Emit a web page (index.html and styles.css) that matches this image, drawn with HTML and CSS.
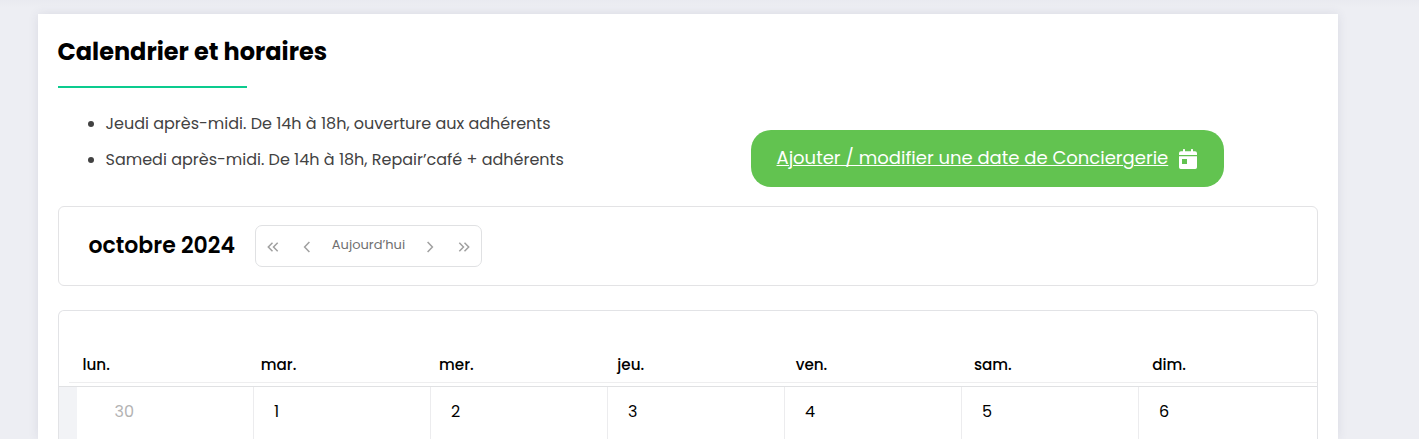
FILE: index.html
```html
<!DOCTYPE html>
<html lang="fr">
<head>
  <meta charset="UTF-8">
  <meta name="viewport" content="width=device-width, initial-scale=1.0">
  <title>Calendrier et horaires</title>
  <link rel="stylesheet" href="styles.css">
</head>
<body>
  <main class="card">
    <h1 class="title">Calendrier et horaires</h1>

    <section class="intro">
      <ul class="hours">
        <li>Jeudi après-midi. De 14h à 18h, ouverture aux adhérents</li>
        <li>Samedi après-midi. De 14h à 18h, Repair’café + adhérents</li>
      </ul>
      <a class="add-button" href="#">
        <span>Ajouter / modifier une date de Conciergerie</span>
        <svg width="18" height="20" viewBox="0 0 18 20" fill="#fff">
          <path d="M0 4.3Q0 2.2 2 2.2H4V.6Q4 0 4.6 0H5.4Q6 0 6 .6V2.2H12V.6Q12 0 12.6 0H13.4Q14 0 14 .6V2.2H16Q18 2.2 18 4.3V6H0Z"/>
          <path fill-rule="evenodd" d="M0 7.2H18V18.3Q18 20 16.3 20H1.7Q0 20 0 18.3ZM3 10V15H8V10Z"/>
        </svg>
      </a>
    </section>

    <div class="toolbar">
      <h2 class="month">octobre 2024</h2>
      <div class="pager">
        <button aria-label="Année précédente"><svg width="12" height="10" viewBox="0 0 12 10"><path d="M5.5.8 1.3 5l4.2 4.2M10.7.8 6.5 5l4.2 4.2"/></svg></button>
        <button aria-label="Mois précédent"><svg width="8" height="12" viewBox="0 0 8 12"><path d="M6.4 1 1.6 6l4.8 5"/></svg></button>
        <button class="today">Aujourd’hui</button>
        <button aria-label="Mois suivant"><svg width="8" height="12" viewBox="0 0 8 12"><path d="M1.6 1 6.4 6l-4.8 5"/></svg></button>
        <button aria-label="Année suivante"><svg width="12" height="10" viewBox="0 0 12 10"><path d="M1.3.8 5.5 5 1.3 9.2M6.5.8 10.7 5 6.5 9.2"/></svg></button>
      </div>
    </div>

    <div class="calendar">
      <div class="weekdays">
        <div>lun.</div>
        <div>mar.</div>
        <div>mer.</div>
        <div>jeu.</div>
        <div>ven.</div>
        <div>sam.</div>
        <div>dim.</div>
      </div>
      <div class="week">
        <div class="gutter"></div>
        <div class="day other">30</div>
        <div class="day">1</div>
        <div class="day">2</div>
        <div class="day">3</div>
        <div class="day">4</div>
        <div class="day">5</div>
        <div class="day">6</div>
      </div>
    </div>
  </main>
</body>
</html>
```
FILE: styles.css
```css
* {
  box-sizing: border-box;
}

body {
  margin: 0;
  height: 439px;
  padding: 14px 81px 0 38px;
  background: linear-gradient(#e9eaf0, #edeef3 8px);
  font-family: Poppins, Inter, sans-serif;
  font-size: 16px;
  color: #424242;
}

.card {
  height: 425px;
  padding: 20px 20px 0;
  background: #fff;
  box-shadow: 0 0 10px rgba(60, 60, 100, 0.1);
}

.title {
  margin: 0;
  height: 54px;
  font-size: 24px;
  line-height: 36px;
  font-weight: 700;
  text-indent: -0.5px;
  color: #000;
  white-space: nowrap;
}

.title::after {
  content: "";
  display: block;
  width: 15%;
  height: 2px;
  margin-top: 16px;
  background: #0ccb8e;
}

.intro {
  display: flex;
  height: 118px;
}

.hours {
  width: 693px;
  margin: 18px 0 0;
  padding: 0 0 0 47.5px;
  line-height: 36px;
  white-space: nowrap;
}

.hours li {
  list-style: none;
  display: flex;
  align-items: center;
}

.hours li::before {
  content: "";
  width: 6px;
  height: 6px;
  margin: 0 11.5px 0 -17.5px;
  border-radius: 50%;
  background: #424242;
}

.add-button {
  display: flex;
  align-items: center;
  justify-content: space-between;
  width: 473px;
  height: 57px;
  margin-top: 42px;
  padding: 0 27px 2px 25.5px;
  border-radius: 20px;
  background: #62c350;
  color: #fff;
  font-size: 18px;
  text-underline-offset: 1px;
  text-decoration-thickness: 1px;
  white-space: nowrap;
}

.add-button svg {
  margin-top: 2px;
}

.toolbar {
  display: flex;
  align-items: center;
  height: 80px;
  padding-left: 29.5px;
  border: 1px solid #e3e3e5;
  border-radius: 6px;
}

.month {
  width: 166.5px;
  margin: 0;
  padding-bottom: 2px;
  font-size: 22px;
  font-weight: 600;
  color: #000;
  white-space: nowrap;
}

.pager {
  display: grid;
  grid-template-columns: 34px 34px 89px 34px 34px;
  width: 227px;
  height: 42px;
  border: 1px solid #e0e1e3;
  border-radius: 7px;
}

.pager button {
  display: flex;
  align-items: center;
  justify-content: center;
  padding: 2px 0 0;
  border: 0;
  background: none;
  font-family: inherit;
}

.pager .today {
  padding: 0 0 2px;
  font-size: 13px;
  color: #707070;
}

.pager svg {
  fill: none;
  stroke: #a0a0a0;
  stroke-width: 1.5;
}

.calendar {
  height: 129px;
  margin-top: 24px;
  border: 1px solid #e2e3e6;
  border-bottom: 0;
  border-radius: 6px 6px 0 0;
}

.weekdays {
  display: grid;
  grid-template-columns: repeat(7, 1fr);
  height: 72px;
  margin-left: 10px;
  padding-top: 42px;
  border-bottom: 1px solid #eeeeef;
  color: #000;
  font-size: 15.2px;
  font-weight: 500;
  line-height: 24px;
}

.weekdays div {
  padding-left: 13.5px;
}

.week {
  display: grid;
  grid-template-columns: 18px 176px repeat(5, 177px) 1fr;
  height: 53px;
  margin-top: 3px;
  border-top: 1px solid #e0e1e3;
}

.gutter {
  background: #f2f3f6;
}

.day {
  padding: 13px 0 0 20px;
  border-left: 1px solid #ececee;
  color: #000;
  line-height: 24px;
}

.day.other {
  padding-left: 37.5px;
  border-left: 0;
  color: #b3b3b3;
}
```
